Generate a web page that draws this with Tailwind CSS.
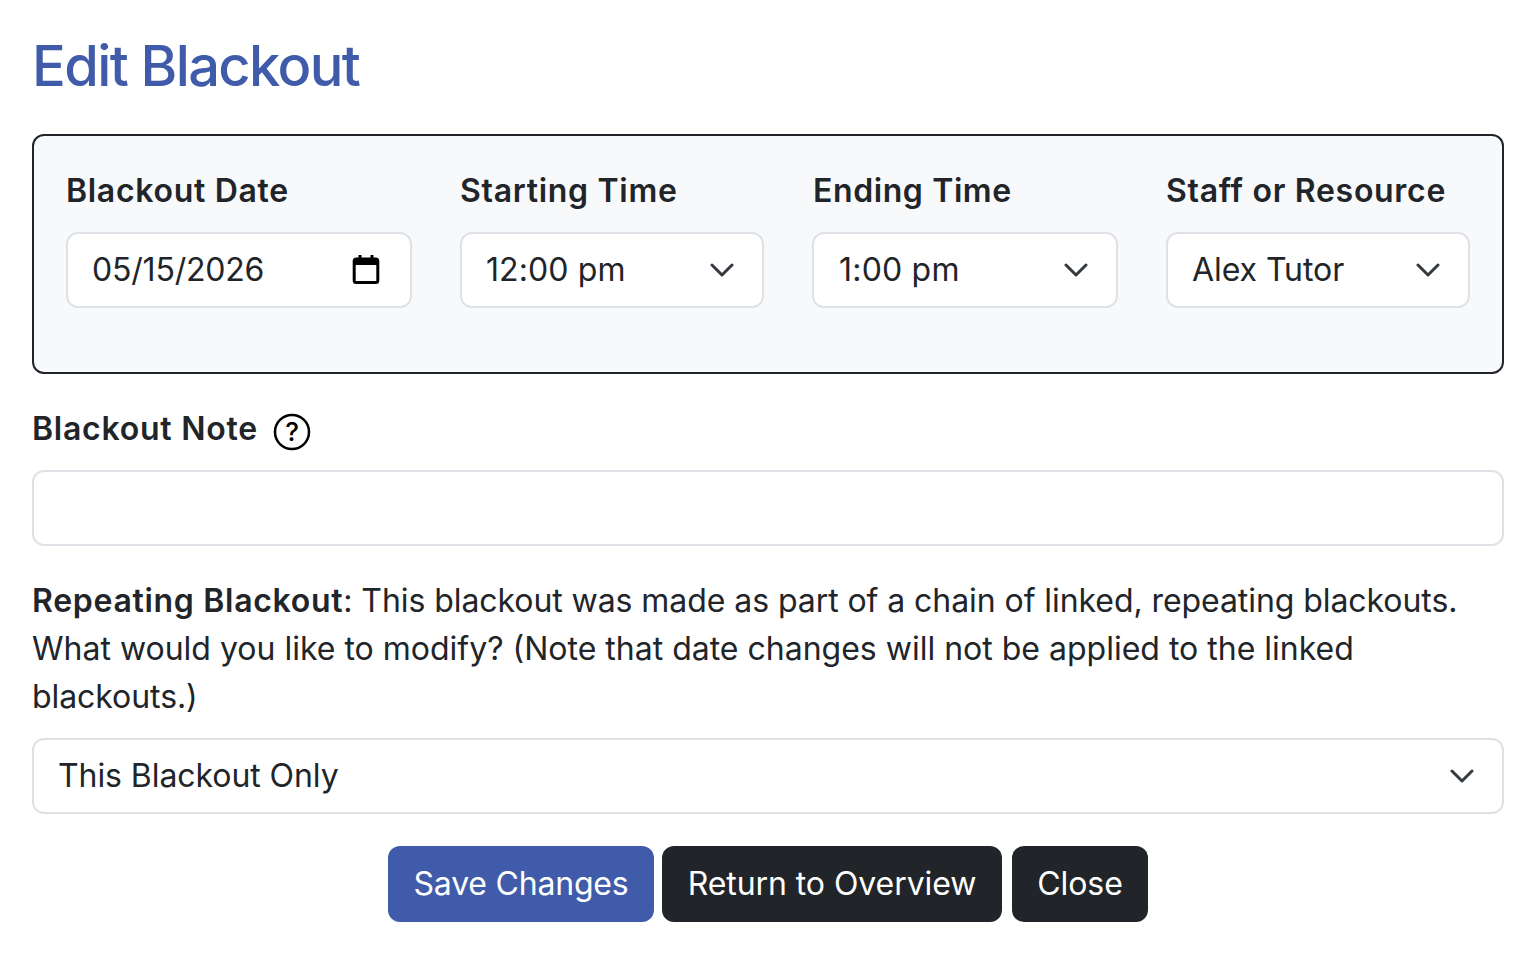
<!DOCTYPE html>
<html><head><script src="https://cdn.jsdelivr.net/npm/@tailwindcss/browser@4"></script></head>
<body class="bg-white">
<div class="w-[1536px] h-[954px] overflow-hidden px-8 font-['Inter',sans-serif] text-[#212529] text-[32px] leading-[48px] tracking-[-0.07px]">
  <h1 class="text-[56px] leading-[67px] text-[#3f5ba9] tracking-[-1.6px] pt-[33px] mb-[34px] font-medium">Edit Blackout</h1>
  <div class="h-[240px] rounded-[12px] border-2 border-[#212529] bg-[#f8f9fb] pt-[32px] px-[32px] flex">
    <div class="w-[346px] mr-[48px]">
      <div class="font-semibold tracking-[0.7px] leading-[46px] mb-[18px] h-[46px]">Blackout Date</div>
      <div class="h-[76px] rounded-[12px] border-2 border-[#dee2e6] bg-white pl-[24px] pr-[30px] flex items-center justify-between"><span class="tracking-[-0.2px]">05/15/2026</span>
        <svg class="w-[28px] h-[32px] -mt-[2px]" viewBox="0 0 28 32"><rect x="2.2" y="6" width="23.6" height="23.6" rx="2" fill="none" stroke="#000" stroke-width="3"/><path d="M2 7.5q0-2 2-2h20q2 0 2 2V12H2z" fill="#000"/><path d="M8 2v5M20 2v5" stroke="#000" stroke-width="3"/></svg>
      </div>
    </div>
    <div class="w-[304px] mr-[48px]">
      <div class="font-semibold tracking-[0.7px] leading-[46px] mb-[18px] h-[46px]">Starting Time</div>
      <div class="h-[76px] rounded-[12px] border-2 border-[#dee2e6] bg-white pl-[24px] pr-[28px] flex items-center justify-between"><span class="tracking-[0.1px]">12:00 pm</span>
        <svg class="w-[24px] h-[16px]" viewBox="0 0 24 16"><path d="M2 3l10 10L22 3" fill="none" stroke="#343a40" stroke-width="3" stroke-linecap="round" stroke-linejoin="round"/></svg>
      </div>
    </div>
    <div class="w-[306px] mr-[48px]">
      <div class="font-semibold tracking-[0.6px] pl-px leading-[46px] mb-[18px] h-[46px]">Ending Time</div>
      <div class="h-[76px] rounded-[12px] border-2 border-[#dee2e6] bg-white pl-[25px] pr-[28px] flex items-center justify-between"><span class="tracking-[0.2px]">1:00 pm</span>
        <svg class="w-[24px] h-[16px]" viewBox="0 0 24 16"><path d="M2 3l10 10L22 3" fill="none" stroke="#343a40" stroke-width="3" stroke-linecap="round" stroke-linejoin="round"/></svg>
      </div>
    </div>
    <div class="w-[304px]">
      <div class="font-semibold tracking-[0.7px] leading-[46px] mb-[18px] h-[46px]">Staff or Resource</div>
      <div class="h-[76px] rounded-[12px] border-2 border-[#dee2e6] bg-white pl-[24px] pr-[28px] flex items-center justify-between">Alex Tutor
        <svg class="w-[24px] h-[16px]" viewBox="0 0 24 16"><path d="M2 3l10 10L22 3" fill="none" stroke="#343a40" stroke-width="3" stroke-linecap="round" stroke-linejoin="round"/></svg>
      </div>
    </div>
  </div>
  <div class="flex items-center mt-[32px] h-[48px] mb-[16px]">
    <span class="font-semibold tracking-[0.75px] -mt-[2px]">Blackout Note</span>
    <svg class="w-[38px] h-[38px] ml-[15px] mt-[4px]" viewBox="0 0 38 38"><circle cx="19" cy="19" r="17" fill="none" stroke="#000" stroke-width="2.5"/><text x="19" y="28" text-anchor="middle" font-size="26" font-family="Inter" font-weight="500" fill="#000">?</text></svg>
  </div>
  <div class="h-[76px] rounded-[12px] border-2 border-[#dee2e6] bg-white"></div>
  <p class="mt-[31px] mb-[17px]"><span class="font-semibold tracking-[0.7px]">Repeating Blackout</span>: This blackout was made as part of a chain of linked, repeating blackouts. <span class="tracking-[0px]">What would you like to modify? (Note that date changes will not be applied to the linked</span> blackouts.)</p>
  <div class="h-[76px] rounded-[12px] border-2 border-[#dee2e6] bg-white pl-[24px] pr-[28px] flex items-center justify-between">This Blackout Only
    <svg class="w-[24px] h-[16px]" viewBox="0 0 24 16"><path d="M2 3l10 10L22 3" fill="none" stroke="#343a40" stroke-width="3" stroke-linecap="round" stroke-linejoin="round"/></svg>
  </div>
  <div class="flex justify-center mt-[32px]">
    <button class="h-[76px] w-[266px] rounded-[12px] bg-[#3f5ba9] text-white mr-[8px] tracking-[-0.2px]">Save Changes</button>
    <button class="h-[76px] w-[340px] rounded-[12px] bg-[#212529] text-white mr-[10px]">Return to Overview</button>
    <button class="h-[76px] w-[136px] rounded-[12px] bg-[#212529] text-white">Close</button>
  </div>
</div>
</body></html>
